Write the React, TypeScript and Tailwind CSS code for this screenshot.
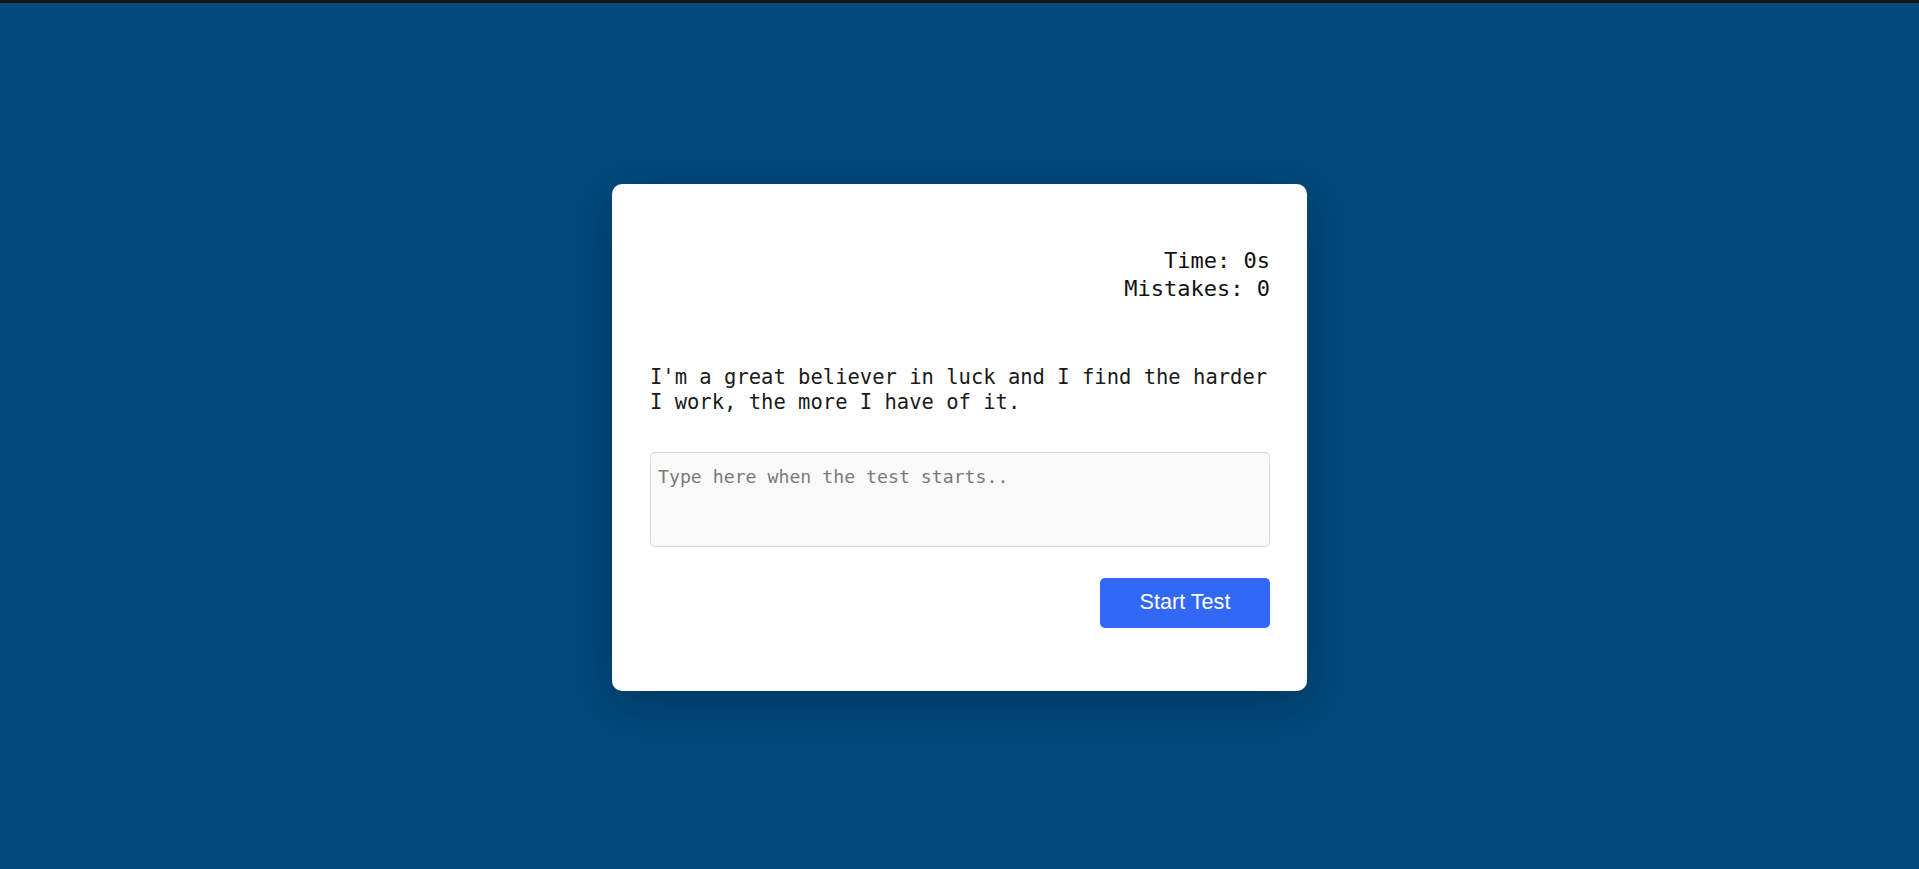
export default function App() {
  return (
    <div className="w-full h-screen flex flex-col bg-[#004a7c] overflow-hidden">
      {/* browser chrome strip */}
      <div className="h-[3px] bg-[#141414] shrink-0" />

      <div className="flex-1 flex items-center justify-center pt-[2px]">
        <div className="w-[695px] bg-white rounded-[10px] pl-[38px] pr-[37px] pt-[63px] pb-[63px] shadow-[0_12px_45px_rgba(0,20,40,0.35)] font-['DejaVu_Sans_Mono',monospace]">
          {/* Stats */}
          <div className="text-right text-[22px] leading-[28px] text-[#111]">
            <div>Time: 0s</div>
            <div>Mistakes: 0</div>
          </div>

          {/* Quote */}
          <p className="mt-[62px] text-[20.5px] leading-[25px] text-[#1a1a1a]">
            I'm a great believer in luck and I find the harder I work, the more I have of it.
          </p>

          {/* Input */}
          <textarea
            className="mt-[37px] block w-full h-[95px] resize-none rounded-[5px] border border-[#d6d6d6] bg-[#f9f9f9] px-[7px] pt-[12px] pb-[8px] text-[18.2px] leading-[24px] text-[#222] placeholder:text-[#7a7a7a] outline-none font-['DejaVu_Sans_Mono',monospace]"
            placeholder="Type here when the test starts.."
          />

          {/* Action */}
          <div className="mt-[31px] flex justify-end">
            <button className="w-[170px] h-[50px] rounded-[5px] bg-[#3268f6] text-white text-[21.6px] font-['Liberation_Sans',Arial,sans-serif]">
              Start Test
            </button>
          </div>
        </div>
      </div>
    </div>
  );
}
